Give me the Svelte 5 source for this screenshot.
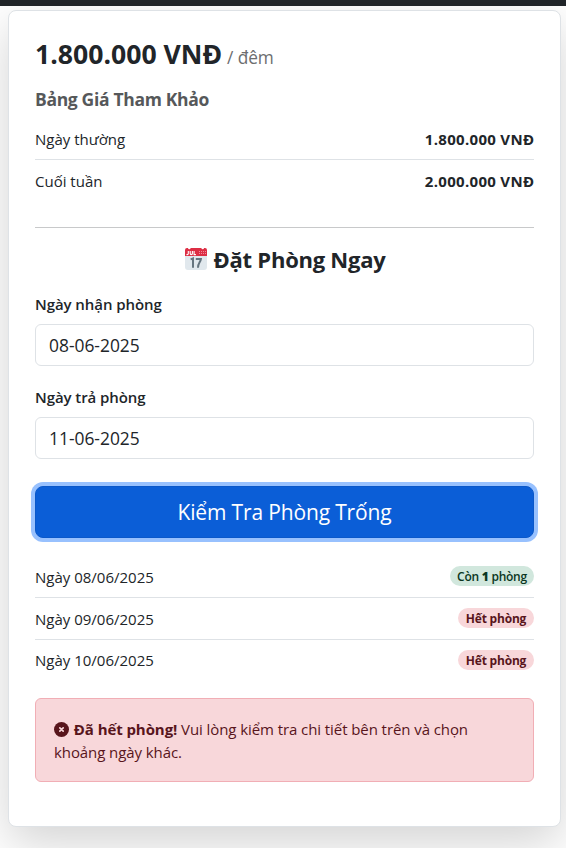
<script>
  let checkIn = "08-06-2025";
  let checkOut = "11-06-2025";

  const prices = [
    { label: "Ngày thường", price: "1.800.000 VNĐ" },
    { label: "Cuối tuần", price: "2.000.000 VNĐ" }
  ];

  const days = [
    { date: "08/06/2025", rooms: 1 },
    { date: "09/06/2025", rooms: 0 },
    { date: "10/06/2025", rooms: 0 }
  ];
</script>

<div class="navbar"></div>
<div class="card">
  <h3 class="price"><span>1.800.000 VNĐ</span><small>/ đêm</small></h3>
  <h5 class="subtitle">Bảng Giá Tham Khảo</h5>
  <ul class="list">
    {#each prices as item}
      <li class="row">
        <span>{item.label}</span>
        <strong class="row-price">{item.price}</strong>
      </li>
    {/each}
  </ul>

  <hr />

  <h4 class="title">
    <svg class="calendar" viewBox="0 0 24 24">
      <path fill="#e1e8ed" d="M1 7h22v13a3 3 0 0 1-3 3H4a3 3 0 0 1-3-3z" />
      <path fill="#dd2e44" d="M1 9V3a2 2 0 0 1 2-2h1a1.3 1.3 0 0 0 2.6 0h10.8a1.3 1.3 0 0 0 2.6 0h1a2 2 0 0 1 2 2v6z" />
      <path fill="none" stroke="#fff" stroke-width="1.1" d="M4.3 4v2.6q0 1-.9 1h-.9M6.2 4v2.6q0 1 1.1 1t1.1-1V4M10.1 4v3.6h1.8" />
      <path fill="none" stroke="#f08a9a" stroke-width="1" stroke-dasharray="1 1" d="M15 4.5h7M15 6.5h7" />
      <path fill="none" stroke="#66757f" stroke-width="2" d="M6.6 12.4l2.400-.9v9.300M11.800 12.100h5.100q-.2 1.400-1.300 3.200-1.500 2.400-1.600 5.500" />
    </svg>
    <span>Đặt Phòng Ngay</span>
  </h4>

  <label class="label" for="check-in">Ngày nhận phòng</label>
  <input id="check-in" class="field" type="text" bind:value={checkIn} />

  <label class="label" for="check-out">Ngày trả phòng</label>
  <input id="check-out" class="field" type="text" bind:value={checkOut} />

  <button class="check-button">Kiểm Tra Phòng Trống</button>

  <ul class="list days">
    {#each days as day}
      <li class="row">
        <span class="day">Ngày {day.date}</span>
        {#if day.rooms > 0}
          <span class="badge available">Còn <b>{day.rooms}</b> phòng</span>
        {:else}
          <span class="badge full">Hết phòng</span>
        {/if}
      </li>
    {/each}
  </ul>

  <div class="alert">
    <svg class="alert-icon" viewBox="0 0 16 16">
      <circle cx="8" cy="8" r="8" fill="#58151c" />
      <path d="M6.2 6.2l3.6 3.6M9.8 6.2l-3.6 3.6" stroke="#f8d7da" stroke-width="1.8" stroke-linecap="round" />
    </svg>
    <strong>Đã hết phòng!</strong> <span>Vui lòng kiểm tra chi tiết bên trên và chọn<br />khoảng ngày khác.</span>
  </div>
</div>

<style>
  :global(body) {
    background: #fff;
    color: #212529;
    font-family: "Open Sans", "Noto Sans", sans-serif;
    font-size: 15px;
    height: 848px;
    overflow: hidden;
  }

  .navbar {
    background: #212529;
    height: 6px;
  }

  .card {
    background: #fff;
    border: 1px solid #dee2e6;
    border-radius: 8px;
    box-shadow: 0 16px 48px rgba(0, 0, 0, 0.175);
    box-sizing: border-box;
    height: 817px;
    margin: 4px 5px 0 8px;
    padding: 26px;
  }

  .price {
    align-items: baseline;
    display: flex;
    font-size: 26.6px;
    gap: 5px;
    line-height: 34px;
    margin: 0 0 12px;
    white-space: nowrap;
  }

  .price small {
    color: #6c6d6f;
    font-size: 17.3px;
    font-weight: 400;
    letter-spacing: -0.1px;
  }

  .subtitle {
    color: #56585a;
    font-size: 17.5px;
    letter-spacing: -0.33px;
    line-height: 24px;
    margin: 0 0 7px;
  }

  .list {
    list-style: none;
    margin: 0;
    padding: 0;
  }

  .row {
    align-items: center;
    border-bottom: 1px solid #dee2e6;
    box-sizing: border-box;
    display: flex;
    height: 42px;
    justify-content: space-between;
  }

  .row:last-child {
    border-bottom: 0;
  }

  .days .row:last-child .day {
    margin-bottom: 2px;
  }

  .row-price {
    letter-spacing: 0.3px;
    margin-right: -0.3px;
  }

  hr {
    border: 0;
    border-top: 1px solid #c8c9ca;
    margin: 25px 0 15px;
  }

  .title {
    align-items: center;
    display: flex;
    font-size: 22px;
    gap: 6px;
    justify-content: center;
    letter-spacing: -0.25px;
    line-height: 32px;
    margin: 0 0 17px;
  }

  .calendar {
    height: 24px;
    margin-top: -1px;
    width: 24px;
  }

  .label {
    display: block;
    font-weight: 600;
    letter-spacing: -0.07px;
    line-height: 24px;
    margin-bottom: 8px;
  }

  .field {
    background: #fff;
    border: 1px solid #dee2e6;
    border-radius: 6px;
    box-sizing: border-box;
    color: #212529;
    display: block;
    font-family: inherit;
    font-size: 17.4px;
    height: 42px;
    margin: 0 0 19px;
    padding: 0 13px;
    width: 100%;
  }

  .check-button {
    background: #0b5ed7;
    border: 1px solid #0a58ca;
    border-radius: 8px;
    box-shadow: 0 0 0 4px #98c1fe;
    color: #fff;
    display: block;
    font-family: inherit;
    font-size: 21px;
    height: 52px;
    letter-spacing: -0.15px;
    margin: 27px 0 18px;
    padding: 0;
    width: 100%;
  }

  .badge {
    border-radius: 10px;
    box-sizing: border-box;
    font-size: 12px;
    font-weight: 700;
    height: 20px;
    letter-spacing: -0.2px;
    line-height: 21px;
    margin-bottom: 2px;
    text-align: center;
  }

  .available {
    background: #d1e7dd;
    color: #0a3622;
    font-weight: 600;
    letter-spacing: -0.25px;
    width: 84px;
  }

  .full {
    background: #f8d7da;
    color: #58151c;
    width: 76px;
  }

  .alert {
    background: #f8d7da;
    border: 1px solid #f1aeb5;
    border-radius: 6px;
    box-sizing: border-box;
    color: #58151c;
    height: 84px;
    letter-spacing: -0.08px;
    line-height: 23px;
    margin-top: 16px;
    padding: 19px 18px;
    white-space: nowrap;
  }

  .alert-icon {
    height: 15px;
    margin-right: 1px;
    vertical-align: -2px;
    width: 15px;
  }
</style>
